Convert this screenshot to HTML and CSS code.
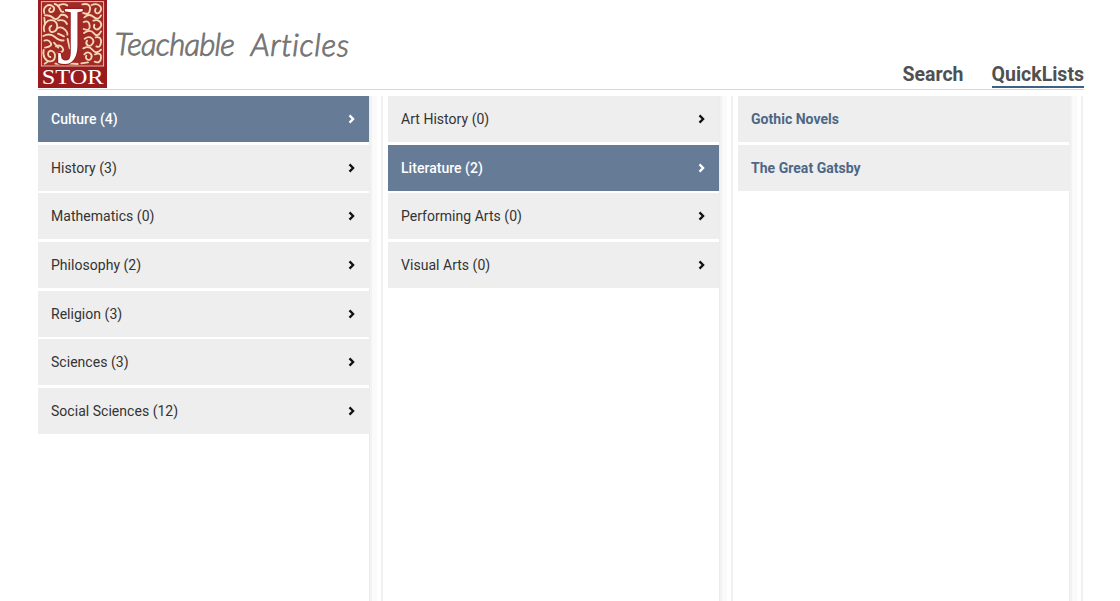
FILE: index.html
```html
<!DOCTYPE html>
<html lang="en">
<head>
<meta charset="utf-8">
<title>JSTOR Teachable Articles</title>
<link rel="stylesheet" href="styles.css">
</head>
<body>
<header class="header">
  <svg class="logo" viewBox="24 0 207 264" role="img" aria-label="JSTOR">
    <rect x="24" y="0" width="207" height="264" fill="#991b1e"/>
    <rect x="34" y="5" width="187" height="193" fill="#a12a26" stroke="#f4dcc0" stroke-width="2.5"/>
    <g class="scroll">
      <path d="M43 40C37 20 55 10 67 18S69 40 59 35M59 35Q55 29 61 25M74 12Q86 15 90 28T110 32M83 18Q98 8 112 16M45 46Q60 44 70 54T92 45Q106 42 112 52"/>
      <path d="M43 94C37 75 51 57 68 61S86 89 72 95S54 83 64 77M43 54L45 74M84 61Q104 57 111 72M80 85Q94 78 104 88T112 104M84 101L102 109"/>
      <path d="M40 108Q60 98 75 111T101 121M43 122Q55 117 62 128T45 143M41 150C37 168 46 185 62 184S79 158 66 153S50 169 61 171M78 139Q91 132 98 144T83 159M76 191Q96 194 93 177M72 128L85 143M44 191L55 184"/>
      <path d="M157 13Q182 8 180 28T158 38M185 15C206 7 218 22 211 34S190 38 197 26M163 52Q177 39 191 51T213 46M161 66Q177 59 179 77T161 87"/>
      <path d="M190 62C209 55 219 72 210 83S188 86 193 74M162 99Q181 86 192 100T213 94M164 116C182 104 196 120 187 132S164 134 171 122M197 112Q215 109 213 127T199 139"/>
      <path d="M160 145Q177 136 188 150T213 149M163 163C174 150 189 162 184 174S163 177 169 167M195 163Q215 156 213 174T194 185M154 190L174 187M111 190L143 192M113 117L119 145"/>
    </g>
    <g class="logo-text">
      <text x="80" y="189" font-size="248" textLength="82" lengthAdjust="spacingAndGlyphs" class="logo-j">J</text>
      <text x="35" y="251" font-size="64" textLength="186" lengthAdjust="spacingAndGlyphs">STOR</text>
    </g>
  </svg>
  <svg class="wordmark" viewBox="0 0 250 50" role="img" aria-label="Teachable Articles">
    <g transform="rotate(.3)">
      <text x="5" y="35" textLength="120" lengthAdjust="spacing">Teachable</text>
      <text x="141" y="35" textLength="98" lengthAdjust="spacing">Articles</text>
    </g>
  </svg>
  <nav class="nav">
    <a class="nav-link">Search</a>
    <a class="nav-link nav-active">QuickLists</a>
  </nav>
</header>
<svg class="symbols"><symbol id="chevron" viewBox="0 0 8 10"><path d="M1.5 1.4 5.1 5 1.5 8.6" fill="none" stroke="currentColor" stroke-width="2.3"/></symbol></svg>
<main class="columns">
  <section class="column">
    <div class="item selected"><span>Culture (4)</span><svg class="chev"><use href="#chevron"/></svg></div>
    <div class="item"><span>History (3)</span><svg class="chev"><use href="#chevron"/></svg></div>
    <div class="item"><span>Mathematics (0)</span><svg class="chev"><use href="#chevron"/></svg></div>
    <div class="item"><span>Philosophy (2)</span><svg class="chev"><use href="#chevron"/></svg></div>
    <div class="item"><span>Religion (3)</span><svg class="chev"><use href="#chevron"/></svg></div>
    <div class="item"><span>Sciences (3)</span><svg class="chev"><use href="#chevron"/></svg></div>
    <div class="item"><span>Social Sciences (12)</span><svg class="chev"><use href="#chevron"/></svg></div>
  </section>
  <section class="column">
    <div class="item"><span>Art History (0)</span><svg class="chev"><use href="#chevron"/></svg></div>
    <div class="item selected"><span>Literature (2)</span><svg class="chev"><use href="#chevron"/></svg></div>
    <div class="item"><span>Performing Arts (0)</span><svg class="chev"><use href="#chevron"/></svg></div>
    <div class="item"><span>Visual Arts (0)</span><svg class="chev"><use href="#chevron"/></svg></div>
  </section>
  <section class="column">
    <div class="item leaf"><span>Gothic Novels</span></div>
    <div class="item leaf"><span>The Great Gatsby</span></div>
  </section>
</main>
</body>
</html>
```

FILE: styles.css
```css
* { box-sizing: border-box; }
body {
  margin: 0;
  height: 601px;
  padding-left: 38px;
  overflow: hidden;
  background: #fff;
  color: #333;
  font-family: Roboto, sans-serif;
}
.header {
  display: flex;
  width: 1046px;
  height: 90px;
  border-bottom: 1px solid #d6d6d6;
}
.logo { width: 69px; height: 88px; flex: none; overflow: visible; }
.scroll { fill: none; stroke: #f4d8b4; stroke-width: 5.5; stroke-linecap: round; }
.logo-text { fill: #fff; font-family: "Liberation Serif", serif; }
.logo-j { stroke: #991b1e; stroke-width: 7; paint-order: stroke; }
.wordmark { width: 250px; height: 50px; margin: 20px 0 0 3px; flex: none; }
.wordmark text {
  font: italic 300 31px Lato, sans-serif;
  font-variant-ligatures: none;
  fill: #747474;
  stroke: #747474;
  stroke-width: .9px;
  stroke-linejoin: round;
}
.nav { display: flex; gap: 28px; margin: 60px 0 0 auto; }
.nav-link {
  height: 28px;
  font-size: 19.5px;
  line-height: 29px;
  font-weight: 700;
  color: #505050;
}
.nav-active { border-bottom: 2px solid #3f6183; }
.symbols { display: none; }
.columns { display: flex; gap: 4px; padding-top: 6px; }
.column {
  display: flex;
  flex-direction: column;
  gap: 2.7px;
  width: 346px;
  height: 505px;
  padding-right: 14.6px;
  background: linear-gradient(90deg, #ececec 0 1px, #f2f2f2 1px 3px, #fafafa 3px 8px, #fff 8px 12px, #f0f0f0 12px 14px, #fff 14px) right / 15px 100% no-repeat;
}
.item {
  display: flex;
  align-items: center;
  justify-content: space-between;
  height: 46px;
  flex: none;
  padding: 0 13px;
  background: #eee;
  font-size: 14px;
  letter-spacing: .03px;
}
.selected { background: #667b96; color: #fff; font-weight: 500; }
.leaf { color: #4d6785; font-weight: 700; }
.chev { width: 8px; height: 10px; color: #111; }
.selected .chev { color: #fff; }
```
